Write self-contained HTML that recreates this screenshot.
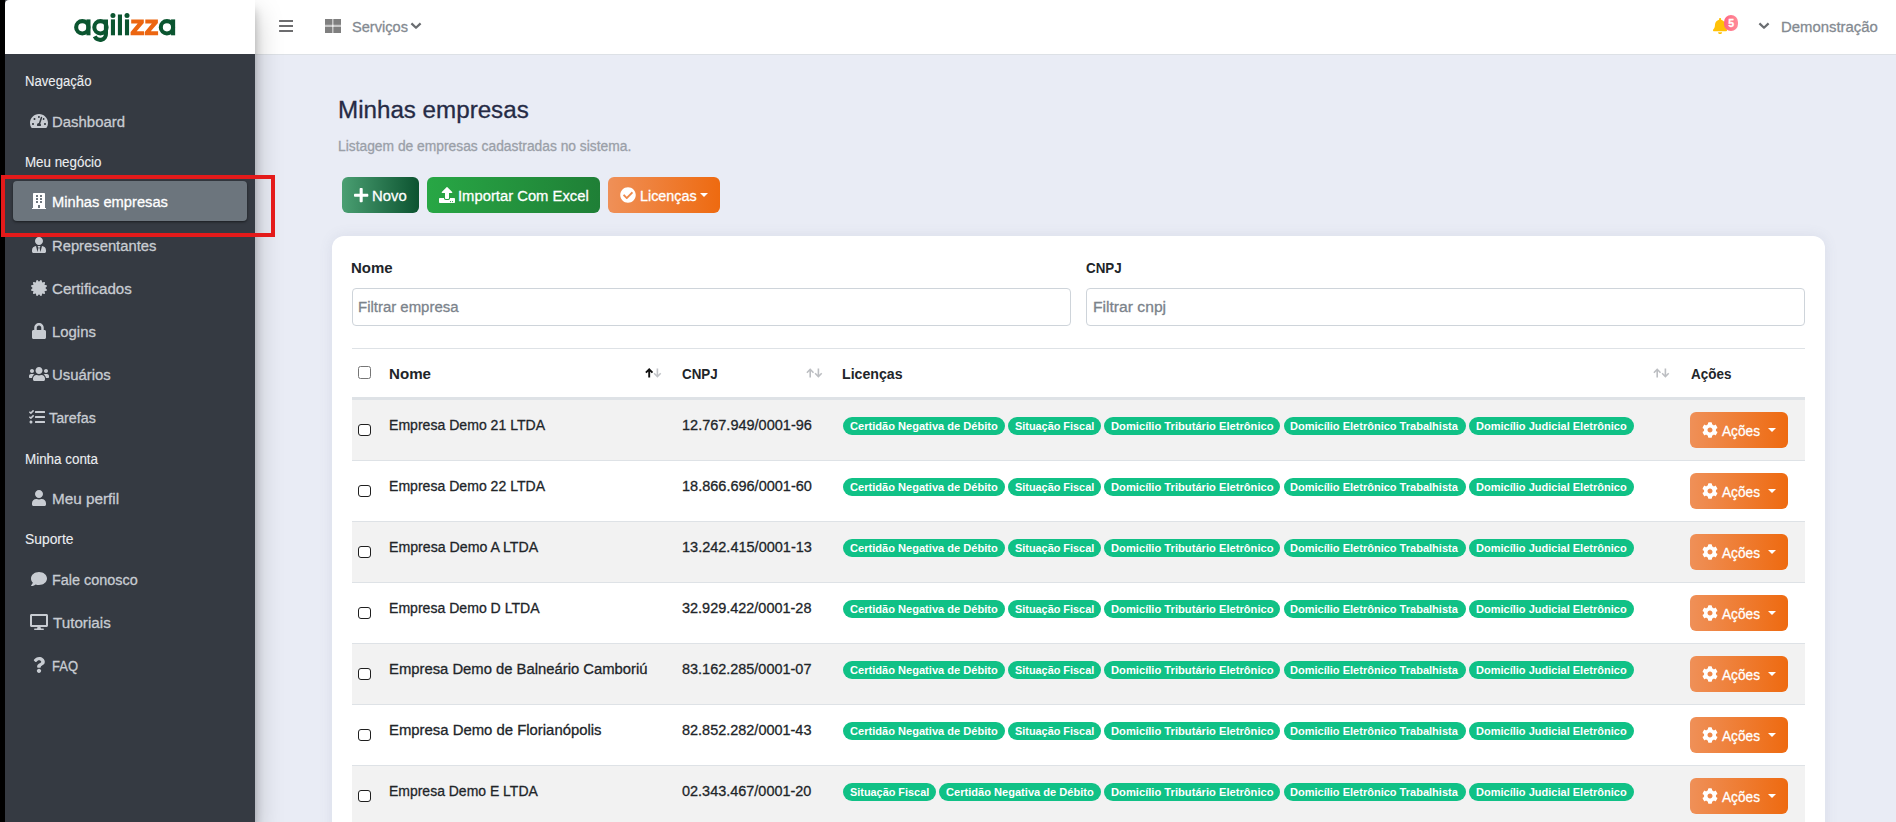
<!DOCTYPE html>
<html lang="pt-br">
<head>
<meta charset="utf-8">
<title>Minhas empresas</title>
<style>
*{box-sizing:border-box;margin:0;padding:0}
html,body{width:1896px;height:822px;overflow:hidden}
body{font-family:"Liberation Sans",sans-serif;background:#e9ecf5;color:#212529;position:relative;font-size:14.8px}
svg{display:block}
.abs{position:absolute}
.t{position:absolute;white-space:nowrap;line-height:18px;-webkit-text-stroke:0.3px}
#strip{position:absolute;left:0;top:0;width:12px;height:822px;background:linear-gradient(90deg,#000 5px,#4a4d55 5px);z-index:1}
#side{position:absolute;left:5px;top:0;width:250px;height:822px;background:#353a42;z-index:5;border-top-left-radius:4px;box-shadow:0 14px 28px rgba(0,0,0,.25),0 10px 10px rgba(0,0,0,.22)}
#brand{position:absolute;left:0;top:0;width:250px;height:54px;background:#fff;border-top-left-radius:4px}
#logo{position:absolute;left:-5px;top:0}
.sh{color:#eceef1;-webkit-text-stroke:0.1px}
.si{color:#c8ccd2}
.si.act{color:#fff}
.ic{position:absolute;fill:#c8ccd2}
#act{position:absolute;left:8px;top:181px;width:234px;height:40px;background:#6c757d;border-radius:4px;box-shadow:0 1px 3px rgba(0,0,0,.25),0 1px 2px rgba(0,0,0,.3)}
#red{position:absolute;left:1px;top:175px;width:274px;height:62px;border:4px solid #e41a1a;z-index:20}
#top{position:absolute;left:255px;top:0;width:1641px;height:55px;background:#fff;border-bottom:1px solid #dde1e6;z-index:2}
.tt{color:#848a91}
h1{font-weight:normal;color:#262b45;z-index:3;line-height:30px;-webkit-text-stroke:0.7px #262b45}
#sub{color:#9a9fa8;z-index:3}
.btn{position:absolute;height:36px;border-radius:6px;color:#fff;z-index:3}
.btn svg{fill:#fff}
.car{position:absolute;border-left:4px solid transparent;border-right:4px solid transparent;border-top:4px solid #fff}
#card{position:absolute;left:332px;top:236px;width:1493px;height:620px;background:#fff;border-radius:12px;z-index:3;box-shadow:0 0 14px rgba(90,97,140,.11)}
.b{font-weight:bold;color:#212529;-webkit-text-stroke:0}
.inp{position:absolute;height:38px;border:1px solid #ced4da;border-radius:4px;background:#fff}
.ph{color:#7b838b}
.hl{position:absolute;left:20px;width:1453px;background:#dee2e6}
.row{position:absolute;left:20px;width:1453px;height:61px;border-bottom:1px solid #dee2e6}
.row.odd{background:#f2f2f2}
.cb{position:absolute;width:12.5px;height:12.5px;border:1.4px solid #1f1f1f;border-radius:3px;background:#fff}
.bd{position:absolute;top:17px;height:18px;border-radius:9px;background:#10c186}
.bt{color:#fff;font-weight:bold;-webkit-text-stroke:0}
.ab{position:absolute;left:1338px;top:12px;width:98px;height:36px;border-radius:6px;background:linear-gradient(90deg,#ef9058,#ee6a10);color:#fff}
.ab svg{fill:#fff}
.so{position:absolute}
</style>
</head>
<body>
<div id="strip"></div>
<div id="top">
  <svg class="abs" style="left:23px;top:18px" width="16" height="16" viewBox="0 0 16 16"><path fill="#6d6d6f" d="M1.1 2h13.9v2.05H1.1zM1.1 7h13.9v2.05H1.1zM1.1 12h13.9v2.05H1.1z"/></svg>
  <svg class="abs" style="left:69px;top:18px" width="18" height="16" viewBox="0 0 18 16"><rect x="1" y="1" width="16" height="13.9" fill="#c6c6c6"/><rect x="8.35" y="1" width="1.05" height="13.9" fill="#fff"/><path fill="#7f7f7f" d="M1 1h7.35v5.85H1zM9.4 1H17v5.85H9.4zM1 9.1h7.35v5.8H1zM9.4 9.1H17v5.8H9.4z"/></svg>
  <div id="t1" class="t tt" style="left:97.01px;top:18.10px;font-size:15.3px;transform:scaleX(0.9552);transform-origin:0 0;">Serviços</div>
  <svg class="abs" style="left:155.20px;top:21px" width="12" height="10" viewBox="0 0 12 10"><path d="M1.4 2.4L6 6.8L10.6 2.4" fill="none" stroke="#6a6d71" stroke-width="2.2" stroke-linejoin="round"/></svg>
  <svg class="abs" style="left:1458.11px;top:17.90px;fill:#ffc107" width="14.17" height="16.20" viewBox="0 0 448 512"><path d="M224 512c35.32 0 63.97-28.65 63.97-64H160.03c0 35.35 28.65 64 63.97 64zm215.39-149.71c-19.32-20.76-55.47-51.99-55.47-154.29 0-77.7-54.48-139.9-127.94-155.16V32c0-17.67-14.32-32-31.98-32s-31.98 14.33-31.98 32v20.84C118.56 68.1 64.08 130.3 64.08 208c0 102.3-36.15 133.53-55.47 154.29-6 6.45-8.66 14.16-8.61 21.71.11 16.4 12.98 32 32.1 32h383.8c19.12 0 32-15.6 32.1-32 .05-7.55-2.61-15.27-8.61-21.71z"/></svg>
  <div class="abs" style="left:1468.8px;top:14.8px;width:14.4px;height:16px;border-radius:8px;background:linear-gradient(90deg,#ff6680,#ff8c9a)"></div>
  <div id="t2" class="t" style="left:1473.30px;top:13.96px;font-size:10.5px;color:#fff;font-weight:bold;">5</div>
  <svg class="abs" style="left:1503.35px;top:21px" width="12" height="10" viewBox="0 0 12 10"><path d="M1.4 2.4L6 6.8L10.6 2.4" fill="none" stroke="#6a6d71" stroke-width="2.2" stroke-linejoin="round"/></svg>
  <div id="t3" class="t tt" style="left:1526.18px;top:18.10px;font-size:15.3px;transform:scaleX(0.9733);transform-origin:0 0;">Demonstração</div>
</div>
<div id="side">
  <div id="brand"><svg id="logo" width="260" height="54" viewBox="0 0 260 54"><circle cx="82.30" cy="27.3" r="6.15" fill="none" stroke="#0b5530" stroke-width="4.1"/><rect x="86.40" y="19.4" width="4.1" height="15.9" fill="#0b5530"/><circle cx="100.45" cy="27.3" r="6.15" fill="none" stroke="#0b5530" stroke-width="4.1"/><path d="M105.95 19.4V33.6A5.9 5.9 0 0 1 94.7 36.4" fill="none" stroke="#0b5530" stroke-width="4.1"/><circle cx="112.95" cy="15.4" r="2.5" fill="#0b5530"/><rect x="110.9" y="19.4" width="4.1" height="15.9" fill="#0b5530"/><rect x="117.9" y="14.5" width="4.1" height="20.8" fill="#0b5530"/><circle cx="127" cy="15.4" r="2.5" fill="#0b5530"/><rect x="124.95" y="19.4" width="4.1" height="15.9" fill="#0b5530"/><polygon fill="#ec6611" points="131.2,19.6 143.8,19.6 143.8,22.9 136.7,31.3 144.0,31.3 144.0,35.2 130.6,35.2 130.6,31.9 137.7,23.5 131.2,23.5"/><polygon fill="#ec6611" points="145.3,19.6 157.9,19.6 157.9,22.9 150.8,31.3 158.1,31.3 158.1,35.2 144.7,35.2 144.7,31.9 151.8,23.5 145.3,23.5"/><circle cx="166.94" cy="27.3" r="6.15" fill="none" stroke="#0b5530" stroke-width="4.1"/><rect x="171.04" y="19.4" width="4.1" height="15.9" fill="#0b5530"/></svg></div>
  <div id="act"></div>
  <div id="t4" class="t sh" style="left:19.92px;top:71.95px;font-size:14.0px;transform:scaleX(0.9386);transform-origin:0 0;">Navegação</div>
  <svg class="ic" style="left:25.00px;top:113.00px;" width="18.00" height="16.00" viewBox="0 0 576 512"><path d="M288 32C128.94 32 0 160.94 0 320c0 52.8 14.25 102.26 39.06 144.8 5.61 9.62 16.3 15.2 27.44 15.2h443c11.14 0 21.83-5.58 27.44-15.2C561.75 422.26 576 372.8 576 320c0-159.06-128.94-288-288-288zm0 64c14.71 0 26.58 10.13 30.32 23.65-1.11 2.26-2.64 4.23-3.45 6.67l-9.22 27.67c-5.13 3.49-10.97 6.01-17.64 6.01-17.67 0-32-14.33-32-32S270.33 96 288 96zM96 384c-17.67 0-32-14.33-32-32s14.33-32 32-32 32 14.33 32 32-14.33 32-32 32zm48-160c-17.67 0-32-14.33-32-32s14.33-32 32-32 32 14.33 32 32-14.33 32-32 32zm246.770-72.410l-61.33 184C343.13 347.33 352 364.54 352 384c0 11.72-3.38 22.55-8.88 32H232.880c-5.5-9.45-8.88-20.28-8.88-32 0-33.94 26.5-61.43 59.9-63.590l61.340-184.010c4.17-12.56 17.73-19.45 30.360-15.170 12.570 4.190 19.350 17.790 15.170 30.360zm14.660 57.200l15.520-46.550c3.470-1.290 7.130-2.230 11.050-2.230 17.670 0 32 14.330 32 32s-14.330 32-32 32c-11.380-.010-20.890-6.280-26.570-15.220zM480 384c-17.670 0-32-14.330-32-32s14.330-32 32-32 32 14.330 32 32-14.330 32-32 32z"/></svg>
  <div id="t5" class="t si" style="left:47.29px;top:112.60px;font-size:15.3px;transform:scaleX(0.9759);transform-origin:0 0;">Dashboard</div>
  <div id="t6" class="t sh" style="left:19.55px;top:153.35px;font-size:14.0px;transform:scaleX(0.9536);transform-origin:0 0;">Meu negócio</div>
  <svg class="ic" style="left:27.00px;top:193.00px;fill:#fff" width="14.00" height="16.00" viewBox="0 0 448 512"><path d="M436 480h-20V24c0-13.255-10.745-24-24-24H56C42.745 0 32 10.745 32 24v456H12c-6.627 0-12 5.373-12 12v20h448v-20c0-6.627-5.373-12-12-12zM128 76c0-6.627 5.373-12 12-12h40c6.627 0 12 5.373 12 12v40c0 6.627-5.373 12-12 12h-40c-6.627 0-12-5.373-12-12V76zm0 96c0-6.627 5.373-12 12-12h40c6.627 0 12 5.373 12 12v40c0 6.627-5.373 12-12 12h-40c-6.627 0-12-5.373-12-12v-40zm52 148h-40c-6.627 0-12-5.373-12-12v-40c0-6.627 5.373-12 12-12h40c6.627 0 12 5.373 12 12v40c0 6.627-5.373 12-12 12zm76 160h-64v-84c0-6.627 5.373-12 12-12h40c6.627 0 12 5.373 12 12v84zm64-172c0 6.627-5.373 12-12 12h-40c-6.627 0-12-5.373-12-12v-40c0-6.627 5.373-12 12-12h40c6.627 0 12 5.373 12 12v40zm0-96c0 6.627-5.373 12-12 12h-40c-6.627 0-12-5.373-12-12v-40c0-6.627 5.373-12 12-12h40c6.627 0 12 5.373 12 12v40zm0-96c0 6.627-5.373 12-12 12h-40c-6.627 0-12-5.373-12-12V76c0-6.627 5.373-12 12-12h40c6.627 0 12 5.373 12 12v40z"/></svg>
  <div id="t7" class="t si act" style="left:46.80px;top:192.60px;font-size:15.3px;transform:scaleX(0.9605);transform-origin:0 0;">Minhas empresas</div>
  <svg class="ic" style="left:27.00px;top:237.00px;" width="14.00" height="16.00" viewBox="0 0 448 512"><path d="M224 256c70.7 0 128-57.3 128-128S294.7 0 224 0 96 57.3 96 128s57.3 128 128 128zm95.8 32.6L272 480l-32-136 32-56h-96l32 56-32 136-47.8-191.4C56.9 292 0 350.3 0 422.4V464c0 26.5 21.5 48 48 48h352c26.5 0 48-21.5 48-48v-41.6c0-72.1-56.9-130.4-128.2-133.800z"/></svg>
  <div id="t8" class="t si" style="left:47.32px;top:236.60px;font-size:15.3px;transform:scaleX(0.9666);transform-origin:0 0;">Representantes</div>
  <svg class="ic" style="left:26.00px;top:280.00px;" width="16.00" height="16.00" viewBox="0 0 512 512"><path d="M458.622 255.92l45.985-45.005c13.708-12.977 7.316-36.039-10.664-40.339l-62.65-15.99 17.661-62.015c4.991-17.838-11.829-34.663-29.661-29.671l-61.994 17.667-15.984-62.671C337.085.197 313.765-6.276 300.99 7.228L256 53.57 211.011 7.229c-12.63-13.351-36.047-7.234-40.325 10.668l-15.984 62.671-61.995-17.667C74.87 57.907 58.056 74.738 63.046 92.572l17.661 62.015-62.65 15.99C.069 174.878-6.31 197.944 7.392 210.915l45.985 45.005-45.985 45.004c-13.708 12.977-7.316 36.039 10.664 40.339l62.65 15.99-17.661 62.015c-4.991 17.838 11.829 34.663 29.661 29.671l61.994-17.667 15.984 62.671c4.439 18.575 27.696 24.018 40.325 10.668L256 458.61l44.989 46.001c12.5 13.488 35.987 7.486 40.325-10.668l15.984-62.671 61.994 17.667c17.836 4.994 34.651-11.837 29.661-29.671l-17.661-62.015 62.65-15.99c17.987-4.302 24.366-27.367 10.664-40.339l-45.984-45.004z"/></svg>
  <div id="t9" class="t si" style="left:47.36px;top:279.60px;font-size:15.3px;transform:scaleX(0.9877);transform-origin:0 0;">Certificados</div>
  <svg class="ic" style="left:27.00px;top:323.00px;" width="14.00" height="16.00" viewBox="0 0 448 512"><path d="M400 224h-24v-72C376 68.2 307.8 0 224 0S72 68.2 72 152v72H48c-26.5 0-48 21.5-48 48v192c0 26.5 21.5 48 48 48h352c26.5 0 48-21.5 48-48V272c0-26.5-21.5-48-48-48zm-104 0H152v-72c0-39.7 32.3-72 72-72s72 32.3 72 72v72z"/></svg>
  <div id="t10" class="t si" style="left:47.24px;top:322.60px;font-size:15.3px;transform:scaleX(0.9739);transform-origin:0 0;">Logins</div>
  <svg class="ic" style="left:24.00px;top:366.00px;" width="20.00" height="16.00" viewBox="0 0 640 512"><path d="M96 224c35.3 0 64-28.7 64-64s-28.7-64-64-64-64 28.7-64 64 28.7 64 64 64zm448 0c35.3 0 64-28.7 64-64s-28.7-64-64-64-64 28.7-64 64 28.7 64 64 64zm32 32h-64c-17.6 0-33.5 7.1-45.1 18.6 40.3 22.1 68.9 62 75.1 109.400h66c17.7 0 32-14.3 32-32v-32c0-35.3-28.7-64-64-64zm-256 0c61.9 0 112-50.1 112-112S381.9 32 320 32 208 82.1 208 144s50.1 112 112 112zm76.8 32h-8.3c-20.8 10-43.9 16-68.5 16s-47.6-6-68.5-16h-8.3C179.6 288 128 339.6 128 403.2V432c0 26.5 21.5 48 48 48h288c26.5 0 48-21.5 48-48v-28.8c0-63.6-51.6-115.2-115.2-115.2zm-223.7-13.4C161.5 263.1 145.6 256 128 256H64c-35.3 0-64 28.7-64 64v32c0 17.7 14.3 32 32 32h65.9c6.3-47.4 34.9-87.3 75.2-109.400z"/></svg>
  <div id="t11" class="t si" style="left:46.93px;top:365.60px;font-size:15.3px;transform:scaleX(0.9734);transform-origin:0 0;">Usuários</div>
  <svg class="ic" style="left:24.10px;top:409.00px;" width="16.00" height="16.00" viewBox="0 0 512 512"><path d="M139.61 35.5a12 12 0 0 0-17 0L58.93 98.81l-22.7-22.12a12 12 0 0 0-17 0L3.53 92.41a12 12 0 0 0 0 17l47.59 47.4a12.78 12.78 0 0 0 17.61 0l15.59-15.62L156.52 69a12.09 12.09 0 0 0 .09-17zm0 159.19a12 12 0 0 0-17 0l-63.68 63.72-22.7-22.1a12 12 0 0 0-17 0L3.53 252a12 12 0 0 0 0 17L51 316.5a12.77 12.77 0 0 0 17.6 0l15.7-15.69 72.2-72.22a12 12 0 0 0 .09-16.9zM64 368c-26.49 0-48.59 21.5-48.59 48S37.53 464 64 464a48 48 0 0 0 0-96zm432 16H208a16 16 0 0 0-16 16v32a16 16 0 0 0 16 16h288a16 16 0 0 0 16-16v-32a16 16 0 0 0-16-16zm0-320H208a16 16 0 0 0-16 16v32a16 16 0 0 0 16 16h288a16 16 0 0 0 16-16V80a16 16 0 0 0-16-16zm0 160H208a16 16 0 0 0-16 16v32a16 16 0 0 0 16 16h288a16 16 0 0 0 16-16v-32a16 16 0 0 0-16-16z"/></svg>
  <div id="t12" class="t si" style="left:43.88px;top:408.60px;font-size:15.3px;transform:scaleX(0.9322);transform-origin:0 0;">Tarefas</div>
  <div id="t13" class="t sh" style="left:19.54px;top:450.15px;font-size:14.0px;transform:scaleX(0.9577);transform-origin:0 0;">Minha conta</div>
  <svg class="ic" style="left:27.00px;top:490.00px;" width="14.00" height="16.00" viewBox="0 0 448 512"><path d="M224 256c70.7 0 128-57.3 128-128S294.7 0 224 0 96 57.3 96 128s57.3 128 128 128zm89.6 32h-16.7c-22.2 10.2-46.9 16-72.9 16s-50.6-5.8-72.9-16h-16.7C60.2 288 0 348.2 0 422.4V464c0 26.5 21.5 48 48 48h352c26.5 0 48-21.5 48-48v-41.6c0-74.2-60.2-134.4-134.400-134.400z"/></svg>
  <div id="t14" class="t si" style="left:46.74px;top:489.60px;font-size:15.3px;transform:scaleX(0.9991);transform-origin:0 0;">Meu perfil</div>
  <div id="t15" class="t sh" style="left:20.05px;top:530.05px;font-size:14.0px;transform:scaleX(0.9894);transform-origin:0 0;">Suporte</div>
  <svg class="ic" style="left:26.00px;top:571.00px;" width="16.00" height="16.00" viewBox="0 0 512 512"><path d="M256 32C114.6 32 0 125.1 0 240c0 49.6 21.4 95 57 130.700C44.5 421.1 2.7 466 2.2 466.5c-2.2 2.3-2.8 5.7-1.500 8.700S4.8 480 8 480c66.300 0 116-31.800 140.600-51.400 32.700 12.300 69 19.400 107.400 19.400 141.400 0 256-93.100 256-208S397.400 32 256 32z"/></svg>
  <div id="t16" class="t si" style="left:47.40px;top:570.60px;font-size:15.3px;transform:scaleX(0.9425);transform-origin:0 0;">Fale conosco</div>
  <svg class="ic" style="left:25.00px;top:614.00px;" width="18.00" height="16.00" viewBox="0 0 576 512"><path d="M528 0H48C21.5 0 0 21.5 0 48v320c0 26.5 21.5 48 48 48h192l-16 48h-72c-13.3 0-24 10.7-24 24s10.7 24 24 24h272c13.3 0 24-10.7 24-24s-10.7-24-24-24h-72l-16-48h192c26.5 0 48-21.5 48-48V48c0-26.5-21.5-48-48-48zm-16 352H64V64h448v288z"/></svg>
  <div id="t17" class="t si" style="left:47.90px;top:613.60px;font-size:15.3px;transform:scaleX(0.9939);transform-origin:0 0;">Tutoriais</div>
  <svg class="ic" style="left:28.00px;top:657.00px;" width="12.00" height="16.00" viewBox="0 0 384 512"><path d="M202.021 0C122.202 0 70.503 32.703 29.914 91.026c-7.363 10.58-5.093 25.086 5.178 32.874l43.138 32.709c10.373 7.865 25.132 6.026 33.253-4.148 25.049-31.381 43.63-49.449 82.757-49.449 30.764 0 68.816 19.799 68.816 49.631 0 22.552-18.617 34.134-48.993 51.164-35.423 19.86-82.299 44.576-82.299 106.405V320c0 13.255 10.745 24 24 24h72.471c13.255 0 24-10.745 24-24v-5.773c0-42.86 125.268-44.645 125.268-160.627C377.504 66.256 286.902 0 202.021 0zM192 373.459c-38.196 0-69.271 31.075-69.271 69.271 0 38.195 31.075 69.27 69.271 69.27s69.271-31.075 69.271-69.271-31.075-69.27-69.271-69.270z"/></svg>
  <div id="t18" class="t si" style="left:46.94px;top:656.60px;font-size:15.3px;transform:scaleX(0.8490);transform-origin:0 0;">FAQ</div>
</div>
<div id="red"></div>
<h1 id="t19" class="t" style="left:337.81px;top:94.63px;font-size:23.0px;transform:scaleX(1.0507);transform-origin:0 0;line-height:30px;">Minhas empresas</h1>
<div id="sub" class="t"  style="left:338.20px;top:138.02px;font-size:13.8px;transform:scaleX(1.0012);transform-origin:0 0;">Listagem de empresas cadastradas no sistema.</div>
<div class="btn" style="left:342px;top:177px;width:77px;background:linear-gradient(90deg,#4a9f72,#0c5330)"><svg class="abs" style="left:12.22px;top:9.90px;" width="14.35" height="16.40" viewBox="0 0 448 512"><path d="M416 208H272V64c0-17.67-14.33-32-32-32h-32c-17.67 0-32 14.33-32 32v144H32c-17.67 0-32 14.33-32 32v32c0 17.67 14.33 32 32 32h144v144c0 17.67 14.33 32 32 32h32c17.67 0 32-14.33 32-32V304h144c17.67 0 32-14.33 32-32v-32c0-17.67-14.33-32-32-32z"/></svg><div id="t21" class="t" style="left:29.80px;top:10.00px;font-size:15.3px;transform:scaleX(0.9698);transform-origin:0 0;">Novo</div></div>
<div class="btn" style="left:427px;top:177px;width:173px;background:linear-gradient(90deg,#28a745,#1f7f36)"><svg class="abs" style="left:11.70px;top:10.10px;" width="16.00" height="16.00" viewBox="0 0 512 512"><path d="M296 384h-80c-13.3 0-24-10.7-24-24V192h-87.7c-17.8 0-26.7-21.5-14.1-34.1L242.3 5.7c7.5-7.5 19.8-7.5 27.3 0l152.2 152.2c12.6 12.6 3.7 34.1-14.1 34.1H320v168c0 13.3-10.7 24-24 24zm216-8v112c0 13.3-10.7 24-24 24H24c-13.3 0-24-10.7-24-24V376c0-13.3 10.7-24 24-24h136v8c0 30.9 25.1 56 56 56h80c30.9 0 56-25.1 56-56v-8h136c13.3 0 24 10.7 24 24zm-124 88c0-11-9-20-20-20s-20 9-20 20 9 20 20 20 20-9 20-20zm64 0c0-11-9-20-20-20s-20 9-20 20 9 20 20 20 20-9 20-20z"/></svg><div id="t22" class="t" style="left:31.07px;top:10.00px;font-size:15.3px;transform:scaleX(0.9672);transform-origin:0 0;">Importar Com Excel</div></div>
<div class="btn" style="left:608px;top:177px;width:112px;background:linear-gradient(90deg,#ef9058,#ee6a10)"><svg class="abs" style="left:12.10px;top:10.10px;" width="16.00" height="16.00" viewBox="0 0 512 512"><path d="M504 256c0 136.967-111.033 248-248 248S8 392.967 8 256 119.033 8 256 8s248 111.033 248 248zM227.314 387.314l184-184c6.248-6.248 6.248-16.379 0-22.627l-22.627-22.627c-6.248-6.249-16.379-6.249-22.628 0L216 308.118l-70.059-70.059c-6.248-6.248-16.379-6.248-22.628 0l-22.627 22.627c-6.248 6.248-6.248 16.379 0 22.627l104 104c6.249 6.249 16.379 6.249 22.628.001z"/></svg><div id="t23" class="t" style="left:31.79px;top:10.00px;font-size:15.3px;transform:scaleX(0.9390);transform-origin:0 0;">Licenças</div><i class="car" style="left:92.39999999999998px;top:16px"></i></div>
<div id="card">
  <div id="t24" class="t b" style="left:19.14px;top:23.37px;font-size:14.8px;transform:scaleX(1.0136);transform-origin:0 0;">Nome</div>
  <div id="t25" class="t b" style="left:754.07px;top:23.37px;font-size:14.8px;transform:scaleX(0.9044);transform-origin:0 0;">CNPJ</div>
  <div class="inp" style="left:20px;top:52px;width:719px"></div>
  <div class="inp" style="left:754px;top:52px;width:719px"></div>
  <div id="t26" class="t ph" style="left:26.25px;top:62.00px;font-size:15.3px;transform:scaleX(0.9771);transform-origin:0 0;">Filtrar empresa</div>
  <div id="t27" class="t ph" style="left:760.70px;top:62.00px;font-size:15.3px;transform:scaleX(1.0233);transform-origin:0 0;">Filtrar cnpj</div>
  <div class="hl" style="top:112px;height:1px"></div>
  <div class="hl" style="top:161px;height:3px"></div>
  <div class="cb" style="left:26px;top:130px;width:13px;height:13px;border:1px solid #767676;border-radius:2.5px"></div>
  <div id="t28" class="t b" style="left:56.57px;top:129.03px;font-size:15.2px;transform:scaleX(0.9956);transform-origin:0 0;">Nome</div>
  <div id="t29" class="t b" style="left:349.82px;top:129.03px;font-size:15.2px;transform:scaleX(0.8813);transform-origin:0 0;">CNPJ</div>
  <div id="t30" class="t b" style="left:510.38px;top:129.03px;font-size:15.2px;transform:scaleX(0.9324);transform-origin:0 0;">Licenças</div>
  <div id="t31" class="t b" style="left:1358.85px;top:129.03px;font-size:15.2px;transform:scaleX(0.8871);transform-origin:0 0;">Ações</div>
  <svg class="so" style="left:312.00px;top:131px" width="19" height="12" viewBox="0 0 19 12"><path d="M5.2 10.5V2.4M1.9 5.7L5.2 2.3L8.5 5.7" fill="none" stroke="#111" stroke-width="1.9"/><path d="M13.4 1.5V9.6M10.1 6.3L13.4 9.7L16.7 6.3" fill="none" stroke="#c2c4c8" stroke-width="1.6"/></svg>
  <svg class="so" style="left:472.85px;top:131px" width="19" height="12" viewBox="0 0 19 12"><path d="M5.2 10.5V2.4M1.9 5.7L5.2 2.3L8.5 5.7" fill="none" stroke="#bcbec2" stroke-width="1.6"/><path d="M13.4 1.5V9.6M10.1 6.3L13.4 9.7L16.7 6.3" fill="none" stroke="#bcbec2" stroke-width="1.6"/></svg>
  <svg class="so" style="left:1320.20px;top:131px" width="19" height="12" viewBox="0 0 19 12"><path d="M5.2 10.5V2.4M1.9 5.7L5.2 2.3L8.5 5.7" fill="none" stroke="#bcbec2" stroke-width="1.6"/><path d="M13.4 1.5V9.6M10.1 6.3L13.4 9.7L16.7 6.3" fill="none" stroke="#bcbec2" stroke-width="1.6"/></svg>
  <div class="row odd" style="top:164px"><div class="cb" style="left:6px;top:23.5px"></div><div id="t32" class="t" style="left:37.26px;top:15.70px;font-size:15.3px;transform:scaleX(0.9194);transform-origin:0 0;">Empresa Demo 21 LTDA</div><div id="t33" class="t" style="left:329.79px;top:15.70px;font-size:15.3px;transform:scaleX(0.9482);transform-origin:0 0;">12.767.949/0001-96</div><div class="bd" style="left:491.0px;width:161.7px"></div><div id="t34" class="t bt" style="left:497.63px;top:16.89px;font-size:11px;transform:scaleX(1.0073);transform-origin:0 0;">Certidão Negativa de Débito</div><div class="bd" style="left:656.1px;width:92.7px"></div><div id="t35" class="t bt" style="left:662.63px;top:16.89px;font-size:11px;transform:scaleX(0.9891);transform-origin:0 0;">Situação Fiscal</div><div class="bd" style="left:752.3px;width:176px"></div><div id="t36" class="t bt" style="left:758.54px;top:16.89px;font-size:11px;transform:scaleX(1.0153);transform-origin:0 0;">Domicílio Tributário Eletrônico</div><div class="bd" style="left:931.8px;width:182px"></div><div id="t37" class="t bt" style="left:937.99px;top:16.89px;font-size:11px;transform:scaleX(1.0020);transform-origin:0 0;">Domicílio Eletrônico Trabalhista</div><div class="bd" style="left:1117.2px;width:165px"></div><div id="t38" class="t bt" style="left:1124.45px;top:16.89px;font-size:11px;transform:scaleX(1.0019);transform-origin:0 0;">Domicílio Judicial Eletrônico</div><div class="ab"><svg class="abs" style="left:12.30px;top:10.00px;" width="16.00" height="16.00" viewBox="0 0 512 512"><path d="M487.4 315.7l-42.6-24.6c4.3-23.2 4.3-47 0-70.2l42.6-24.6c4.9-2.8 7.1-8.6 5.5-14-11.1-35.6-30-67.8-54.7-94.6-3.8-4.1-10-5.1-14.8-2.3L380.8 110c-17.9-15.4-38.5-27.3-60.8-35.1V25.8c0-5.6-3.9-10.5-9.4-11.7-36.7-8.2-74.3-7.8-109.2 0-5.5 1.2-9.4 6.1-9.4 11.7V75c-22.2 7.9-42.8 19.8-60.8 35.1L88.7 85.5c-4.9-2.8-11-1.9-14.8 2.3-24.7 26.7-43.6 58.9-54.7 94.6-1.7 5.4.6 11.2 5.5 14L67.3 221c-4.3 23.2-4.3 47 0 70.2l-42.6 24.6c-4.9 2.8-7.1 8.6-5.5 14 11.1 35.6 30 67.8 54.7 94.6 3.8 4.1 10 5.1 14.8 2.3l42.6-24.6c17.9 15.4 38.5 27.3 60.8 35.1v49.2c0 5.6 3.9 10.5 9.4 11.7 36.7 8.2 74.3 7.8 109.2 0 5.5-1.2 9.4-6.1 9.4-11.7v-49.2c22.2-7.9 42.8-19.8 60.8-35.1l42.6 24.6c4.9 2.8 11 1.9 14.8-2.3 24.7-26.7 43.6-58.9 54.7-94.6 1.5-5.5-.7-11.3-5.6-14.1zM256 336c-44.1 0-80-35.9-80-80s35.9-80 80-80 80 35.9 80 80-35.9 80-80 80z"/></svg><div id="t39" class="t" style="left:32.29px;top:9.50px;font-size:15.3px;transform:scaleX(0.8934);transform-origin:0 0;">Ações</div><i class="car" style="left:77.9px;top:16px"></i></div></div>
  <div class="row" style="top:225px"><div class="cb" style="left:6px;top:23.5px"></div><div id="t40" class="t" style="left:37.26px;top:15.70px;font-size:15.3px;transform:scaleX(0.9194);transform-origin:0 0;">Empresa Demo 22 LTDA</div><div id="t41" class="t" style="left:330.00px;top:15.70px;font-size:15.3px;transform:scaleX(0.9486);transform-origin:0 0;">18.866.696/0001-60</div><div class="bd" style="left:491.0px;width:161.7px"></div><div id="t42" class="t bt" style="left:497.63px;top:16.89px;font-size:11px;transform:scaleX(1.0073);transform-origin:0 0;">Certidão Negativa de Débito</div><div class="bd" style="left:656.1px;width:92.7px"></div><div id="t43" class="t bt" style="left:662.63px;top:16.89px;font-size:11px;transform:scaleX(0.9891);transform-origin:0 0;">Situação Fiscal</div><div class="bd" style="left:752.3px;width:176px"></div><div id="t44" class="t bt" style="left:758.54px;top:16.89px;font-size:11px;transform:scaleX(1.0153);transform-origin:0 0;">Domicílio Tributário Eletrônico</div><div class="bd" style="left:931.8px;width:182px"></div><div id="t45" class="t bt" style="left:937.99px;top:16.89px;font-size:11px;transform:scaleX(1.0020);transform-origin:0 0;">Domicílio Eletrônico Trabalhista</div><div class="bd" style="left:1117.2px;width:165px"></div><div id="t46" class="t bt" style="left:1124.45px;top:16.89px;font-size:11px;transform:scaleX(1.0019);transform-origin:0 0;">Domicílio Judicial Eletrônico</div><div class="ab"><svg class="abs" style="left:12.30px;top:10.00px;" width="16.00" height="16.00" viewBox="0 0 512 512"><path d="M487.4 315.7l-42.6-24.6c4.3-23.2 4.3-47 0-70.2l42.6-24.6c4.9-2.8 7.1-8.6 5.5-14-11.1-35.6-30-67.8-54.7-94.6-3.8-4.1-10-5.1-14.8-2.3L380.8 110c-17.9-15.4-38.5-27.3-60.8-35.1V25.8c0-5.6-3.9-10.5-9.4-11.7-36.7-8.2-74.3-7.8-109.2 0-5.5 1.2-9.4 6.1-9.4 11.7V75c-22.2 7.9-42.8 19.8-60.8 35.1L88.7 85.5c-4.9-2.8-11-1.9-14.8 2.3-24.7 26.7-43.6 58.9-54.7 94.6-1.7 5.4.6 11.2 5.5 14L67.3 221c-4.3 23.2-4.3 47 0 70.2l-42.6 24.6c-4.9 2.8-7.1 8.6-5.5 14 11.1 35.6 30 67.8 54.7 94.6 3.8 4.1 10 5.1 14.8 2.3l42.6-24.6c17.9 15.4 38.5 27.3 60.8 35.1v49.2c0 5.6 3.9 10.5 9.4 11.7 36.7 8.2 74.3 7.8 109.2 0 5.5-1.2 9.4-6.1 9.4-11.7v-49.2c22.2-7.9 42.8-19.8 60.8-35.1l42.6 24.6c4.9 2.8 11 1.9 14.8-2.3 24.7-26.7 43.6-58.9 54.7-94.6 1.5-5.5-.7-11.3-5.6-14.1zM256 336c-44.1 0-80-35.9-80-80s35.9-80 80-80 80 35.9 80 80-35.9 80-80 80z"/></svg><div id="t47" class="t" style="left:32.29px;top:9.50px;font-size:15.3px;transform:scaleX(0.8934);transform-origin:0 0;">Ações</div><i class="car" style="left:77.9px;top:16px"></i></div></div>
  <div class="row odd" style="top:286px"><div class="cb" style="left:6px;top:23.5px"></div><div id="t48" class="t" style="left:37.26px;top:15.70px;font-size:15.3px;transform:scaleX(0.9249);transform-origin:0 0;">Empresa Demo A LTDA</div><div id="t49" class="t" style="left:329.96px;top:15.70px;font-size:15.3px;transform:scaleX(0.9483);transform-origin:0 0;">13.242.415/0001-13</div><div class="bd" style="left:491.0px;width:161.7px"></div><div id="t50" class="t bt" style="left:497.63px;top:16.89px;font-size:11px;transform:scaleX(1.0073);transform-origin:0 0;">Certidão Negativa de Débito</div><div class="bd" style="left:656.1px;width:92.7px"></div><div id="t51" class="t bt" style="left:662.63px;top:16.89px;font-size:11px;transform:scaleX(0.9891);transform-origin:0 0;">Situação Fiscal</div><div class="bd" style="left:752.3px;width:176px"></div><div id="t52" class="t bt" style="left:758.54px;top:16.89px;font-size:11px;transform:scaleX(1.0153);transform-origin:0 0;">Domicílio Tributário Eletrônico</div><div class="bd" style="left:931.8px;width:182px"></div><div id="t53" class="t bt" style="left:937.99px;top:16.89px;font-size:11px;transform:scaleX(1.0020);transform-origin:0 0;">Domicílio Eletrônico Trabalhista</div><div class="bd" style="left:1117.2px;width:165px"></div><div id="t54" class="t bt" style="left:1124.45px;top:16.89px;font-size:11px;transform:scaleX(1.0019);transform-origin:0 0;">Domicílio Judicial Eletrônico</div><div class="ab"><svg class="abs" style="left:12.30px;top:10.00px;" width="16.00" height="16.00" viewBox="0 0 512 512"><path d="M487.4 315.7l-42.6-24.6c4.3-23.2 4.3-47 0-70.2l42.6-24.6c4.9-2.8 7.1-8.6 5.5-14-11.1-35.6-30-67.8-54.7-94.6-3.8-4.1-10-5.1-14.8-2.3L380.8 110c-17.9-15.4-38.5-27.3-60.8-35.1V25.8c0-5.6-3.9-10.5-9.4-11.7-36.7-8.2-74.3-7.8-109.2 0-5.5 1.2-9.4 6.1-9.4 11.7V75c-22.2 7.9-42.8 19.8-60.8 35.1L88.7 85.5c-4.9-2.8-11-1.9-14.8 2.3-24.7 26.7-43.6 58.9-54.7 94.6-1.7 5.4.6 11.2 5.5 14L67.3 221c-4.3 23.2-4.3 47 0 70.2l-42.6 24.6c-4.9 2.8-7.1 8.6-5.5 14 11.1 35.6 30 67.8 54.7 94.6 3.8 4.1 10 5.1 14.8 2.3l42.6-24.6c17.9 15.4 38.5 27.3 60.8 35.1v49.2c0 5.6 3.9 10.5 9.4 11.7 36.7 8.2 74.3 7.8 109.2 0 5.5-1.2 9.4-6.1 9.4-11.7v-49.2c22.2-7.9 42.8-19.8 60.8-35.1l42.6 24.6c4.9 2.8 11 1.9 14.8-2.3 24.7-26.7 43.6-58.9 54.7-94.6 1.5-5.5-.7-11.3-5.6-14.1zM256 336c-44.1 0-80-35.9-80-80s35.9-80 80-80 80 35.9 80 80-35.9 80-80 80z"/></svg><div id="t55" class="t" style="left:32.29px;top:9.50px;font-size:15.3px;transform:scaleX(0.8934);transform-origin:0 0;">Ações</div><i class="car" style="left:77.9px;top:16px"></i></div></div>
  <div class="row" style="top:347px"><div class="cb" style="left:6px;top:23.5px"></div><div id="t56" class="t" style="left:37.26px;top:15.70px;font-size:15.3px;transform:scaleX(0.9195);transform-origin:0 0;">Empresa Demo D LTDA</div><div id="t57" class="t" style="left:330.35px;top:15.70px;font-size:15.3px;transform:scaleX(0.9450);transform-origin:0 0;">32.929.422/0001-28</div><div class="bd" style="left:491.0px;width:161.7px"></div><div id="t58" class="t bt" style="left:497.63px;top:16.89px;font-size:11px;transform:scaleX(1.0073);transform-origin:0 0;">Certidão Negativa de Débito</div><div class="bd" style="left:656.1px;width:92.7px"></div><div id="t59" class="t bt" style="left:662.63px;top:16.89px;font-size:11px;transform:scaleX(0.9891);transform-origin:0 0;">Situação Fiscal</div><div class="bd" style="left:752.3px;width:176px"></div><div id="t60" class="t bt" style="left:758.54px;top:16.89px;font-size:11px;transform:scaleX(1.0153);transform-origin:0 0;">Domicílio Tributário Eletrônico</div><div class="bd" style="left:931.8px;width:182px"></div><div id="t61" class="t bt" style="left:937.99px;top:16.89px;font-size:11px;transform:scaleX(1.0020);transform-origin:0 0;">Domicílio Eletrônico Trabalhista</div><div class="bd" style="left:1117.2px;width:165px"></div><div id="t62" class="t bt" style="left:1124.45px;top:16.89px;font-size:11px;transform:scaleX(1.0019);transform-origin:0 0;">Domicílio Judicial Eletrônico</div><div class="ab"><svg class="abs" style="left:12.30px;top:10.00px;" width="16.00" height="16.00" viewBox="0 0 512 512"><path d="M487.4 315.7l-42.6-24.6c4.3-23.2 4.3-47 0-70.2l42.6-24.6c4.9-2.8 7.1-8.6 5.5-14-11.1-35.6-30-67.8-54.7-94.6-3.8-4.1-10-5.1-14.8-2.3L380.8 110c-17.9-15.4-38.5-27.3-60.8-35.1V25.8c0-5.6-3.9-10.5-9.4-11.7-36.7-8.2-74.3-7.8-109.2 0-5.5 1.2-9.4 6.1-9.4 11.7V75c-22.2 7.9-42.8 19.8-60.8 35.1L88.7 85.5c-4.9-2.8-11-1.9-14.8 2.3-24.7 26.7-43.6 58.9-54.7 94.6-1.7 5.4.6 11.2 5.5 14L67.3 221c-4.3 23.2-4.3 47 0 70.2l-42.6 24.6c-4.9 2.8-7.1 8.6-5.5 14 11.1 35.6 30 67.8 54.7 94.6 3.8 4.1 10 5.1 14.8 2.3l42.6-24.6c17.9 15.4 38.5 27.3 60.8 35.1v49.2c0 5.6 3.9 10.5 9.4 11.7 36.7 8.2 74.3 7.8 109.2 0 5.5-1.2 9.4-6.1 9.4-11.7v-49.2c22.2-7.9 42.8-19.8 60.8-35.1l42.6 24.6c4.9 2.8 11 1.9 14.8-2.3 24.7-26.7 43.6-58.9 54.7-94.6 1.5-5.5-.7-11.3-5.6-14.1zM256 336c-44.1 0-80-35.9-80-80s35.9-80 80-80 80 35.9 80 80-35.9 80-80 80z"/></svg><div id="t63" class="t" style="left:32.29px;top:9.50px;font-size:15.3px;transform:scaleX(0.8934);transform-origin:0 0;">Ações</div><i class="car" style="left:77.9px;top:16px"></i></div></div>
  <div class="row odd" style="top:408px"><div class="cb" style="left:6px;top:23.5px"></div><div id="t64" class="t" style="left:37.14px;top:15.70px;font-size:15.3px;transform:scaleX(0.9684);transform-origin:0 0;">Empresa Demo de Balneário Camboriú</div><div id="t65" class="t" style="left:330.17px;top:15.70px;font-size:15.3px;transform:scaleX(0.9451);transform-origin:0 0;">83.162.285/0001-07</div><div class="bd" style="left:491.0px;width:161.7px"></div><div id="t66" class="t bt" style="left:497.63px;top:16.89px;font-size:11px;transform:scaleX(1.0073);transform-origin:0 0;">Certidão Negativa de Débito</div><div class="bd" style="left:656.1px;width:92.7px"></div><div id="t67" class="t bt" style="left:662.63px;top:16.89px;font-size:11px;transform:scaleX(0.9891);transform-origin:0 0;">Situação Fiscal</div><div class="bd" style="left:752.3px;width:176px"></div><div id="t68" class="t bt" style="left:758.54px;top:16.89px;font-size:11px;transform:scaleX(1.0153);transform-origin:0 0;">Domicílio Tributário Eletrônico</div><div class="bd" style="left:931.8px;width:182px"></div><div id="t69" class="t bt" style="left:937.99px;top:16.89px;font-size:11px;transform:scaleX(1.0020);transform-origin:0 0;">Domicílio Eletrônico Trabalhista</div><div class="bd" style="left:1117.2px;width:165px"></div><div id="t70" class="t bt" style="left:1124.45px;top:16.89px;font-size:11px;transform:scaleX(1.0019);transform-origin:0 0;">Domicílio Judicial Eletrônico</div><div class="ab"><svg class="abs" style="left:12.30px;top:10.00px;" width="16.00" height="16.00" viewBox="0 0 512 512"><path d="M487.4 315.7l-42.6-24.6c4.3-23.2 4.3-47 0-70.2l42.6-24.6c4.9-2.8 7.1-8.6 5.5-14-11.1-35.6-30-67.8-54.7-94.6-3.8-4.1-10-5.1-14.8-2.3L380.8 110c-17.9-15.4-38.5-27.3-60.8-35.1V25.8c0-5.6-3.9-10.5-9.4-11.7-36.7-8.2-74.3-7.8-109.2 0-5.5 1.2-9.4 6.1-9.4 11.7V75c-22.2 7.9-42.8 19.8-60.8 35.1L88.7 85.5c-4.9-2.8-11-1.9-14.8 2.3-24.7 26.7-43.6 58.9-54.7 94.6-1.7 5.4.6 11.2 5.5 14L67.3 221c-4.3 23.2-4.3 47 0 70.2l-42.6 24.6c-4.9 2.8-7.1 8.6-5.5 14 11.1 35.6 30 67.8 54.7 94.6 3.8 4.1 10 5.1 14.8 2.3l42.6-24.6c17.9 15.4 38.5 27.3 60.8 35.1v49.2c0 5.6 3.9 10.5 9.4 11.7 36.7 8.2 74.3 7.8 109.2 0 5.5-1.2 9.4-6.1 9.4-11.7v-49.2c22.2-7.9 42.8-19.8 60.8-35.1l42.6 24.6c4.9 2.8 11 1.9 14.8-2.3 24.7-26.7 43.6-58.9 54.7-94.6 1.5-5.5-.7-11.3-5.6-14.1zM256 336c-44.1 0-80-35.9-80-80s35.9-80 80-80 80 35.9 80 80-35.9 80-80 80z"/></svg><div id="t71" class="t" style="left:32.29px;top:9.50px;font-size:15.3px;transform:scaleX(0.8934);transform-origin:0 0;">Ações</div><i class="car" style="left:77.9px;top:16px"></i></div></div>
  <div class="row" style="top:469px"><div class="cb" style="left:6px;top:23.5px"></div><div id="t72" class="t" style="left:37.14px;top:15.70px;font-size:15.3px;transform:scaleX(0.9727);transform-origin:0 0;">Empresa Demo de Florianópolis</div><div id="t73" class="t" style="left:329.96px;top:15.70px;font-size:15.3px;transform:scaleX(0.9452);transform-origin:0 0;">82.852.282/0001-43</div><div class="bd" style="left:491.0px;width:161.7px"></div><div id="t74" class="t bt" style="left:497.63px;top:16.89px;font-size:11px;transform:scaleX(1.0073);transform-origin:0 0;">Certidão Negativa de Débito</div><div class="bd" style="left:656.1px;width:92.7px"></div><div id="t75" class="t bt" style="left:662.63px;top:16.89px;font-size:11px;transform:scaleX(0.9891);transform-origin:0 0;">Situação Fiscal</div><div class="bd" style="left:752.3px;width:176px"></div><div id="t76" class="t bt" style="left:758.54px;top:16.89px;font-size:11px;transform:scaleX(1.0153);transform-origin:0 0;">Domicílio Tributário Eletrônico</div><div class="bd" style="left:931.8px;width:182px"></div><div id="t77" class="t bt" style="left:937.99px;top:16.89px;font-size:11px;transform:scaleX(1.0020);transform-origin:0 0;">Domicílio Eletrônico Trabalhista</div><div class="bd" style="left:1117.2px;width:165px"></div><div id="t78" class="t bt" style="left:1124.45px;top:16.89px;font-size:11px;transform:scaleX(1.0019);transform-origin:0 0;">Domicílio Judicial Eletrônico</div><div class="ab"><svg class="abs" style="left:12.30px;top:10.00px;" width="16.00" height="16.00" viewBox="0 0 512 512"><path d="M487.4 315.7l-42.6-24.6c4.3-23.2 4.3-47 0-70.2l42.6-24.6c4.9-2.8 7.1-8.6 5.5-14-11.1-35.6-30-67.8-54.7-94.6-3.8-4.1-10-5.1-14.8-2.3L380.8 110c-17.9-15.4-38.5-27.3-60.8-35.1V25.8c0-5.6-3.9-10.5-9.4-11.7-36.7-8.2-74.3-7.8-109.2 0-5.5 1.2-9.4 6.1-9.4 11.7V75c-22.2 7.9-42.8 19.8-60.8 35.1L88.7 85.5c-4.9-2.8-11-1.9-14.8 2.3-24.7 26.7-43.6 58.9-54.7 94.6-1.7 5.4.6 11.2 5.5 14L67.3 221c-4.3 23.2-4.3 47 0 70.2l-42.6 24.6c-4.9 2.8-7.1 8.6-5.5 14 11.1 35.6 30 67.8 54.7 94.6 3.8 4.1 10 5.1 14.8 2.3l42.6-24.6c17.9 15.4 38.5 27.3 60.8 35.1v49.2c0 5.6 3.9 10.5 9.4 11.7 36.7 8.2 74.3 7.8 109.2 0 5.5-1.2 9.4-6.1 9.4-11.7v-49.2c22.2-7.9 42.8-19.8 60.8-35.1l42.6 24.6c4.9 2.8 11 1.9 14.8-2.3 24.7-26.7 43.6-58.9 54.7-94.6 1.5-5.5-.7-11.3-5.6-14.1zM256 336c-44.1 0-80-35.9-80-80s35.9-80 80-80 80 35.9 80 80-35.9 80-80 80z"/></svg><div id="t79" class="t" style="left:32.29px;top:9.50px;font-size:15.3px;transform:scaleX(0.8934);transform-origin:0 0;">Ações</div><i class="car" style="left:77.9px;top:16px"></i></div></div>
  <div class="row odd" style="top:530px"><div class="cb" style="left:6px;top:23.5px"></div><div id="t80" class="t" style="left:37.24px;top:15.70px;font-size:15.3px;transform:scaleX(0.9132);transform-origin:0 0;">Empresa Demo E LTDA</div><div id="t81" class="t" style="left:330.01px;top:15.70px;font-size:15.3px;transform:scaleX(0.9447);transform-origin:0 0;">02.343.467/0001-20</div><div class="bd" style="left:491.0px;width:92.7px"></div><div id="t82" class="t bt" style="left:497.54px;top:16.89px;font-size:11px;transform:scaleX(0.9889);transform-origin:0 0;">Situação Fiscal</div><div class="bd" style="left:587.1px;width:161.7px"></div><div id="t83" class="t bt" style="left:593.71px;top:16.89px;font-size:11px;transform:scaleX(1.0073);transform-origin:0 0;">Certidão Negativa de Débito</div><div class="bd" style="left:752.3px;width:176px"></div><div id="t84" class="t bt" style="left:758.54px;top:16.89px;font-size:11px;transform:scaleX(1.0153);transform-origin:0 0;">Domicílio Tributário Eletrônico</div><div class="bd" style="left:931.8px;width:182px"></div><div id="t85" class="t bt" style="left:937.99px;top:16.89px;font-size:11px;transform:scaleX(1.0020);transform-origin:0 0;">Domicílio Eletrônico Trabalhista</div><div class="bd" style="left:1117.2px;width:165px"></div><div id="t86" class="t bt" style="left:1124.45px;top:16.89px;font-size:11px;transform:scaleX(1.0019);transform-origin:0 0;">Domicílio Judicial Eletrônico</div><div class="ab"><svg class="abs" style="left:12.30px;top:10.00px;" width="16.00" height="16.00" viewBox="0 0 512 512"><path d="M487.4 315.7l-42.6-24.6c4.3-23.2 4.3-47 0-70.2l42.6-24.6c4.9-2.8 7.1-8.6 5.5-14-11.1-35.6-30-67.8-54.7-94.6-3.8-4.1-10-5.1-14.8-2.3L380.8 110c-17.9-15.4-38.5-27.3-60.8-35.1V25.8c0-5.6-3.9-10.5-9.4-11.7-36.7-8.2-74.3-7.8-109.2 0-5.5 1.2-9.4 6.1-9.4 11.7V75c-22.2 7.9-42.8 19.8-60.8 35.1L88.7 85.5c-4.9-2.8-11-1.9-14.8 2.3-24.7 26.7-43.6 58.9-54.7 94.6-1.7 5.4.6 11.2 5.5 14L67.3 221c-4.3 23.2-4.3 47 0 70.2l-42.6 24.6c-4.9 2.8-7.1 8.6-5.5 14 11.1 35.6 30 67.8 54.7 94.6 3.8 4.1 10 5.1 14.8 2.3l42.6-24.6c17.9 15.4 38.5 27.3 60.8 35.1v49.2c0 5.6 3.9 10.5 9.4 11.7 36.7 8.2 74.3 7.8 109.2 0 5.5-1.2 9.4-6.1 9.4-11.7v-49.2c22.2-7.9 42.8-19.8 60.8-35.1l42.6 24.6c4.9 2.8 11 1.9 14.8-2.3 24.7-26.7 43.6-58.9 54.7-94.6 1.5-5.5-.7-11.3-5.6-14.1zM256 336c-44.1 0-80-35.9-80-80s35.9-80 80-80 80 35.9 80 80-35.9 80-80 80z"/></svg><div id="t87" class="t" style="left:32.29px;top:9.50px;font-size:15.3px;transform:scaleX(0.8934);transform-origin:0 0;">Ações</div><i class="car" style="left:77.9px;top:16px"></i></div></div>
</div>
</body>
</html>
